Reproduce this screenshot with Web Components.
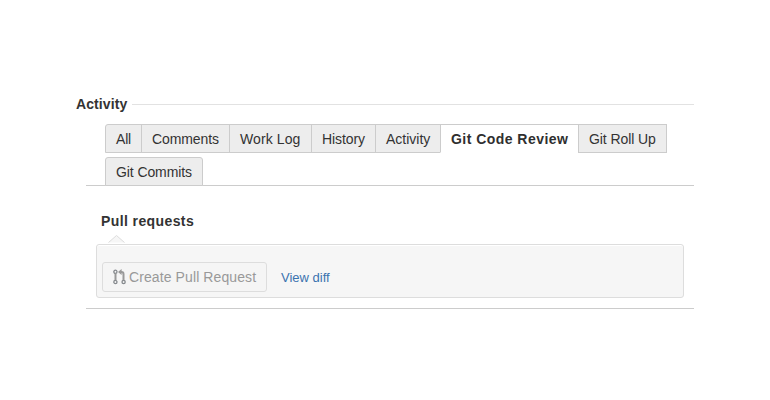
<!DOCTYPE html>
<html lang="en"><head><meta charset="utf-8"><title>Activity</title>
<style>
body{margin:0;background:#fff;color:#333;font:14px/20px "Liberation Sans",Arial,sans-serif}
</style></head><body>
<activity-module></activity-module>
<script>
const define=(name,html)=>{
  const t=document.createElement('template');t.innerHTML=html;
  customElements.define(name,class extends HTMLElement{
    constructor(){super();this.attachShadow({mode:'open'}).append(t.content.cloneNode(true));}
  });
};
define('section-heading',`<style>
:host{display:flex;align-items:center;height:20px;font-weight:bold}
span{width:56px;letter-spacing:.1px}
i{flex:1;height:1px;background:#e2e2e2;margin-top:1px}
</style><span><slot></slot></span><i></i>`);
define('tab-item',`<style>
:host{display:block;box-sizing:border-box;height:29px;width:var(--w);margin-right:-1px;padding:4px 0 0 10px;border:1px solid #ccc;background:#ededed;white-space:nowrap}
:host([first]){border-top-left-radius:3px}
:host([last]){border-top-right-radius:3px}
:host([active]){background:#fff;border-bottom-color:#fff;font-weight:bold;color:#2f2f2f}
span{letter-spacing:var(--ls,0)}
</style><span><slot></slot></span>`);
define('tab-bar',`<style>
:host{display:flex;flex-wrap:wrap;row-gap:4px;height:61px;padding-left:19px;border-bottom:1px solid #ccc}
</style><slot></slot>`);
define('pull-icon',`<style>:host{display:block;width:14px;height:16px}svg{display:block}</style>
<svg width="14" height="16" viewBox="0 0 14 16" fill="none" stroke="#85898d"><g stroke-width="1.3"><circle cx="2.4" cy="2.8" r="1.6"/><circle cx="2.4" cy="13" r="1.6"/><circle cx="10.6" cy="13" r="1.6"/></g><path stroke="#999" stroke-width="2" d="M2.5 4.5V11.3M10.5 11.3V5.2Q10.5 3 8.5 3H7.6"/><path fill="#999" stroke="none" d="M8.6 0V6L5 3Z"/></svg>`);
define('action-button',`<style>
:host{display:flex;box-sizing:border-box;width:165px;height:30px;padding:4px 0 0 10px;border:1px solid #ddd;border-radius:3px;background:#f5f5f5;color:#999;white-space:nowrap;letter-spacing:.1px}
pull-icon{margin:2px 2px 0 0}
</style><pull-icon></pull-icon><span><slot></slot></span>`);
define('callout-box',`<style>
:host{display:flex;position:relative;box-sizing:border-box;height:54px;border:1px solid #ddd;border-radius:3px;background:#f6f6f6;padding:17px 0 0 5px;box-shadow:inset 0 1px #fff}
svg{position:absolute;left:10px;top:-11px}
</style><svg width="20" height="10" viewBox="0 0 20 10"><path d="M1.5 8.5L9.5 1.5L17.5 8.5" fill="#f6f6f6" stroke="#ddd"/></svg><slot></slot>`);
define('text-link',`<style>
:host{display:block;margin:5px 0 0 14px}
a{color:#3b73af;font-size:13px;text-decoration:none}
</style><a><slot></slot></a>`);
define('activity-module',`<style>
:host{display:block;padding:94px 76px 0}
tab-bar{margin:10px 0 0 10px}
section{margin-left:10px;padding:25px 10px 10px;border-bottom:1px solid #ccc}
h3{font:bold 14px/20px "Liberation Sans",Arial,sans-serif;letter-spacing:.4px;margin:0 0 13px 5px}
</style>
<section-heading>Activity</section-heading>
<tab-bar>
<tab-item first style="--w:37px;--ls:-.2px">All</tab-item>
<tab-item style="--w:89px;--ls:-.1px">Comments</tab-item>
<tab-item style="--w:83px;--ls:.1px">Work Log</tab-item>
<tab-item style="--w:65px;--ls:-.1px">History</tab-item>
<tab-item style="--w:66px">Activity</tab-item>
<tab-item active style="--w:139px;--ls:.46px">Git Code Review</tab-item>
<tab-item style="--w:89px;--ls:-.08px">Git Roll Up</tab-item>
<tab-item first last style="--w:98px;--ls:-.1px">Git Commits</tab-item>
</tab-bar>
<section><h3>Pull requests</h3>
<callout-box><action-button>Create Pull Request</action-button><text-link>View diff</text-link></callout-box></section>`);
</script></body></html>
